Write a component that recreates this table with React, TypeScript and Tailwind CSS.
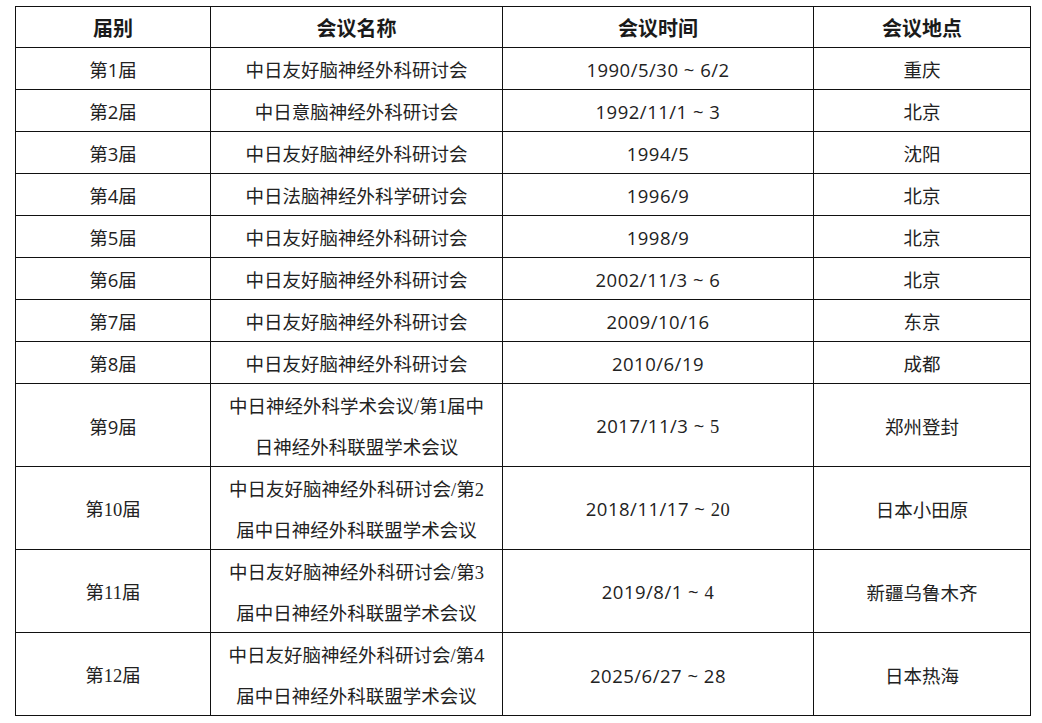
import type { ReactNode } from 'react'

type Row = {
  no: ReactNode
  name: ReactNode
  time: ReactNode
  place: string
  tall?: boolean
}

const serif = 'font-["Liberation_Serif","Noto_Sans_CJK_SC",serif]'

const S = ({ children }: { children: ReactNode }) => <span className={serif}>{children}</span>

const rows: Row[] = [
  { no: '第1届', name: '中日友好脑神经外科研讨会', time: '1990/5/30 ~ 6/2', place: '重庆' },
  { no: '第2届', name: '中日意脑神经外科研讨会', time: '1992/11/1 ~ 3', place: '北京' },
  { no: '第3届', name: '中日友好脑神经外科研讨会', time: '1994/5', place: '沈阳' },
  { no: '第4届', name: '中日法脑神经外科学研讨会', time: '1996/9', place: '北京' },
  { no: '第5届', name: '中日友好脑神经外科研讨会', time: '1998/9', place: '北京' },
  { no: '第6届', name: '中日友好脑神经外科研讨会', time: '2002/11/3 ~ 6', place: '北京' },
  { no: '第7届', name: '中日友好脑神经外科研讨会', time: '2009/10/16', place: '东京' },
  { no: '第8届', name: '中日友好脑神经外科研讨会', time: '2010/6/19', place: '成都' },
  {
    no: '第9届',
    name: (
      <>
        中日神经外科学术会议<S>/</S>第<S>1</S>届中
        <br />
        日神经外科联盟学术会议
      </>
    ),
    time: (
      <>
        2017/11/3 ~ <S>5</S>
      </>
    ),
    place: '郑州登封',
    tall: true,
  },
  {
    no: (
      <>
        第<S>10</S>届
      </>
    ),
    name: (
      <>
        中日友好脑神经外科研讨会<S>/</S>第<S>2</S>
        <br />
        届中日神经外科联盟学术会议
      </>
    ),
    time: (
      <>
        2018/11/17 ~ <S>20</S>
      </>
    ),
    place: '日本小田原',
    tall: true,
  },
  {
    no: (
      <>
        第<S>11</S>届
      </>
    ),
    name: (
      <>
        中日友好脑神经外科研讨会<S>/</S>第<S>3</S>
        <br />
        届中日神经外科联盟学术会议
      </>
    ),
    time: (
      <>
        2019/8/1 ~ <S>4</S>
      </>
    ),
    place: '新疆乌鲁木齐',
    tall: true,
  },
  {
    no: (
      <>
        第<S>12</S>届
      </>
    ),
    name: (
      <>
        中日友好脑神经外科研讨会<S>/</S>第4
        <br />
        届中日神经外科联盟学术会议
      </>
    ),
    time: '2025/6/27 ~ 28',
    place: '日本热海',
    tall: true,
  },
]

const base = 'border border-[#111] text-center align-middle px-2'

export default function App() {
  return (
    <div className='min-h-screen bg-white pt-[6px] pl-[15px] font-["Open_Sans","Noto_Sans_CJK_SC",sans-serif] text-[18.5px] text-[#222]'>
      <table className="w-[1015px] table-fixed border-collapse">
        <colgroup>
          <col className="w-[195px]" />
          <col className="w-[292px]" />
          <col className="w-[311px]" />
          <col className="w-[217px]" />
        </colgroup>
        <thead>
          <tr className="h-[41px]">
            {['届别', '会议名称', '会议时间', '会议地点'].map((h) => (
              <th key={h} className={`${base} leading-[37px] pt-[3px] text-[20px] font-bold text-[#1a1a1a]`}>
                {h}
              </th>
            ))}
          </tr>
        </thead>
        <tbody>
          {rows.map((r, i) => {
            const cell = r.tall ? `${base} leading-[39px] pt-[2px]` : `${base} leading-[38px] pt-[3px]`
            return (
              <tr key={i} className={r.tall ? 'h-[82px]' : 'h-[42px]'}>
                <td className={cell}>{r.no}</td>
                <td className={cell}>{r.name}</td>
                <td className={`${cell} tracking-[0.5px]`}>{r.time}</td>
                <td className={cell}>{r.place}</td>
              </tr>
            )
          })}
        </tbody>
      </table>
    </div>
  )
}
